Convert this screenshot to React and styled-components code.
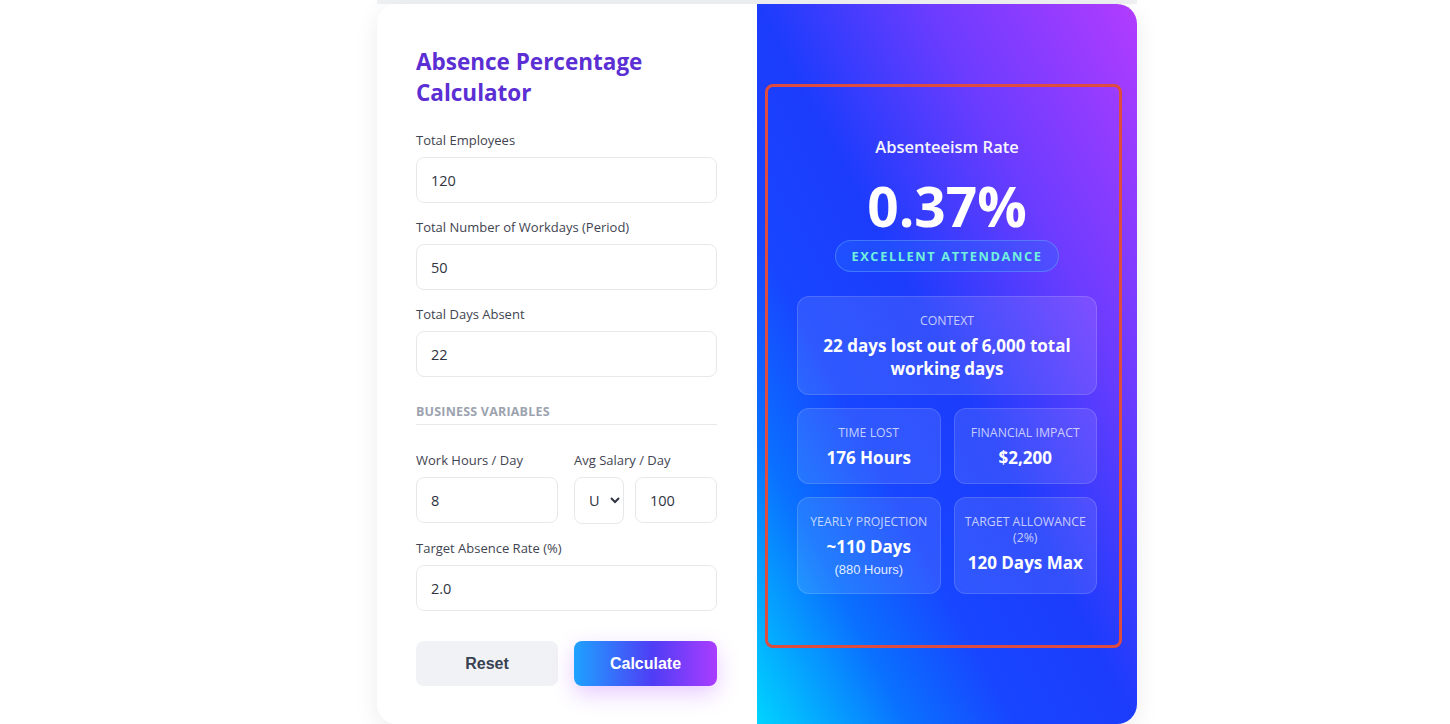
import styled, { createGlobalStyle } from 'styled-components';

const GlobalStyle = createGlobalStyle`
  html, body {
    margin: 0;
    padding: 0;
    background: #ffffff;
    font-family: "Open Sans", "Noto Sans", Arial, sans-serif;
  }
  * { box-sizing: border-box; }
`;

const Page = styled.div`
  min-height: 724px;
  display: flex;
  justify-content: center;
  padding-left: 64px;
`;

const Frame = styled.div`
  width: 760px;
  border-top: 4px solid #f0f1f3;
`;

const Card = styled.div`
  display: grid;
  grid-template-columns: 380px 380px;
  border-radius: 20px;
  overflow: hidden;
  box-shadow: 0 6px 24px rgba(15, 23, 42, 0.08);
`;

const FormPanel = styled.section`
  background: #ffffff;
  padding: 42px 40px 38px 39px;
  display: flex;
  flex-direction: column;
`;

const Title = styled.h1`
  margin: 0 0 23px;
  font-size: 22.5px;
  line-height: 31px;
  font-weight: 700;
  color: #5b2fd3;
`;

const Field = styled.div`
  display: flex;
  flex-direction: column;
  gap: 7px;
  margin-bottom: 15px;
`;

const Label = styled.label`
  font-size: 13px;
  line-height: 19px;
  color: #3f4451;
`;

const Input = styled.input`
  width: 100%;
  height: 46px;
  border: 1px solid #e6e8ec;
  border-radius: 8px;
  padding: 0 14px;
  font-family: inherit;
  font-size: 14.5px;
  color: #2f3440;
  background: #fff;
  outline: none;
`;

const Section = styled.div`
  margin: 11px 0 26px;
  padding-bottom: 4px;
  border-bottom: 1px solid #e6e8ec;
  font-size: 12.5px;
  line-height: 17px;
  font-weight: 700;
  color: #9ca3af;
  letter-spacing: 0.2px;
`;

const Row = styled.div`
  display: grid;
  grid-template-columns: 142px 143px;
  gap: 16px;
`;

const Combo = styled.div`
  display: flex;
  gap: 11px;
`;

const Select = styled.select`
  width: 50px;
  height: 47px;
  flex: none;
  border: 1px solid #e6e8ec;
  border-radius: 8px;
  padding: 0 4px 0 10px;
  font-family: inherit;
  font-size: 14.5px;
  color: #2f3440;
  background: #fff;
`;

const Buttons = styled.div`
  display: grid;
  grid-template-columns: 142px 143px;
  gap: 16px;
  margin-top: 15px;
`;

const Button = styled.button`
  height: 45px;
  border: none;
  border-radius: 8px;
  font-family: "Liberation Sans", Arial, sans-serif;
  font-size: 16px;
  font-weight: 700;
  cursor: pointer;
  color: ${p => (p.$primary ? '#ffffff' : '#374151')};
  background: ${p =>
    p.$primary ? 'linear-gradient(90deg, #1ea2ff 0%, #4f3df5 55%, #aa3dff 100%)' : '#f1f2f5'};
  box-shadow: ${p => (p.$primary ? '0 8px 22px rgba(170, 70, 255, 0.28)' : 'none')};
`;

const ResultPanel = styled.section`
  background: linear-gradient(
    to top right,
    #00d4ff 0%,
    #0a70ff 20%,
    #1846ff 34%,
    #1c3cfc 50%,
    #6a3cff 72%,
    #b23cff 100%
  );
  display: flex;
  align-items: flex-start;
  padding: 80px 15px 0 8px;
`;

const Highlight = styled.div`
  width: 357px;
  border: 3px solid #de4b3f;
  border-radius: 8px;
  padding: 48px 22px 51px 29px;
  display: flex;
  flex-direction: column;
  align-items: center;
  color: #ffffff;
`;

const RateLabel = styled.div`
  font-size: 16.5px;
  line-height: 24px;
  font-weight: 600;
  opacity: 0.95;
`;

const Rate = styled.div`
  margin-top: 18px;
  font-size: 55px;
  line-height: 58px;
  font-weight: 700;
`;

const Badge = styled.div`
  margin-top: 5px;
  height: 32px;
  padding: 0 15px;
  display: flex;
  align-items: center;
  border-radius: 16px;
  background: rgba(40, 110, 255, 0.35);
  border: 1px solid rgba(120, 200, 255, 0.35);
  color: #72f0dc;
  font-size: 12.8px;
  font-weight: 700;
  letter-spacing: 1.6px;
`;

const Stats = styled.div`
  margin-top: 24px;
  width: 300px;
  display: grid;
  grid-template-columns: 1fr 1fr;
  gap: 13px;
`;

const StatCard = styled.div`
  grid-column: ${p => (p.$wide ? '1 / -1' : 'auto')};
  min-height: ${p => (p.$tall ? '97px' : p.$wide ? '97px' : '76px')};
  padding: ${p => (p.$wide ? '16px 10px 14px' : '16px 8px 12px')};
  border-radius: 12px;
  background: rgba(255, 255, 255, 0.1);
  border: 1px solid rgba(255, 255, 255, 0.14);
  display: flex;
  flex-direction: column;
  align-items: center;
  text-align: center;
`;

const StatLabel = styled.div`
  font-size: 12.3px;
  line-height: 16px;
  text-transform: uppercase;
  color: rgba(255, 255, 255, 0.72);
`;

const StatValue = styled.div`
  margin-top: 5px;
  font-size: 17px;
  line-height: 23px;
  font-weight: 700;
`;

const StatNote = styled.div`
  margin-top: 4px;
  font-family: "Liberation Sans", Arial, sans-serif;
  font-size: 13px;
  line-height: 16px;
  color: rgba(255, 255, 255, 0.88);
`;

export default function App() {
  return (
    <>
      <GlobalStyle />
      <Page>
        <Frame>
          <Card>
            <FormPanel>
              <Title>Absence Percentage Calculator</Title>
              <Field>
                <Label>Total Employees</Label>
                <Input defaultValue="120" />
              </Field>
              <Field>
                <Label>Total Number of Workdays (Period)</Label>
                <Input defaultValue="50" />
              </Field>
              <Field>
                <Label>Total Days Absent</Label>
                <Input defaultValue="22" />
              </Field>
              <Section>BUSINESS VARIABLES</Section>
              <Row>
                <Field>
                  <Label>Work Hours / Day</Label>
                  <Input defaultValue="8" />
                </Field>
                <Field>
                  <Label>Avg Salary / Day</Label>
                  <Combo>
                    <Select defaultValue="USD">
                      <option value="USD">U</option>
                    </Select>
                    <Input defaultValue="100" />
                  </Combo>
                </Field>
              </Row>
              <Field>
                <Label>Target Absence Rate (%)</Label>
                <Input defaultValue="2.0" />
              </Field>
              <Buttons>
                <Button>Reset</Button>
                <Button $primary>Calculate</Button>
              </Buttons>
            </FormPanel>
            <ResultPanel>
              <Highlight>
                <RateLabel>Absenteeism Rate</RateLabel>
                <Rate>0.37%</Rate>
                <Badge>EXCELLENT ATTENDANCE</Badge>
                <Stats>
                  <StatCard $wide>
                    <StatLabel>Context</StatLabel>
                    <StatValue>22 days lost out of 6,000 total working days</StatValue>
                  </StatCard>
                  <StatCard>
                    <StatLabel>Time Lost</StatLabel>
                    <StatValue>176 Hours</StatValue>
                  </StatCard>
                  <StatCard>
                    <StatLabel>Financial Impact</StatLabel>
                    <StatValue>$2,200</StatValue>
                  </StatCard>
                  <StatCard $tall>
                    <StatLabel>Yearly Projection</StatLabel>
                    <StatValue>~110 Days</StatValue>
                    <StatNote>(880 Hours)</StatNote>
                  </StatCard>
                  <StatCard $tall>
                    <StatLabel>Target Allowance (2%)</StatLabel>
                    <StatValue>120 Days Max</StatValue>
                  </StatCard>
                </Stats>
              </Highlight>
            </ResultPanel>
          </Card>
        </Frame>
      </Page>
    </>
  );
}
